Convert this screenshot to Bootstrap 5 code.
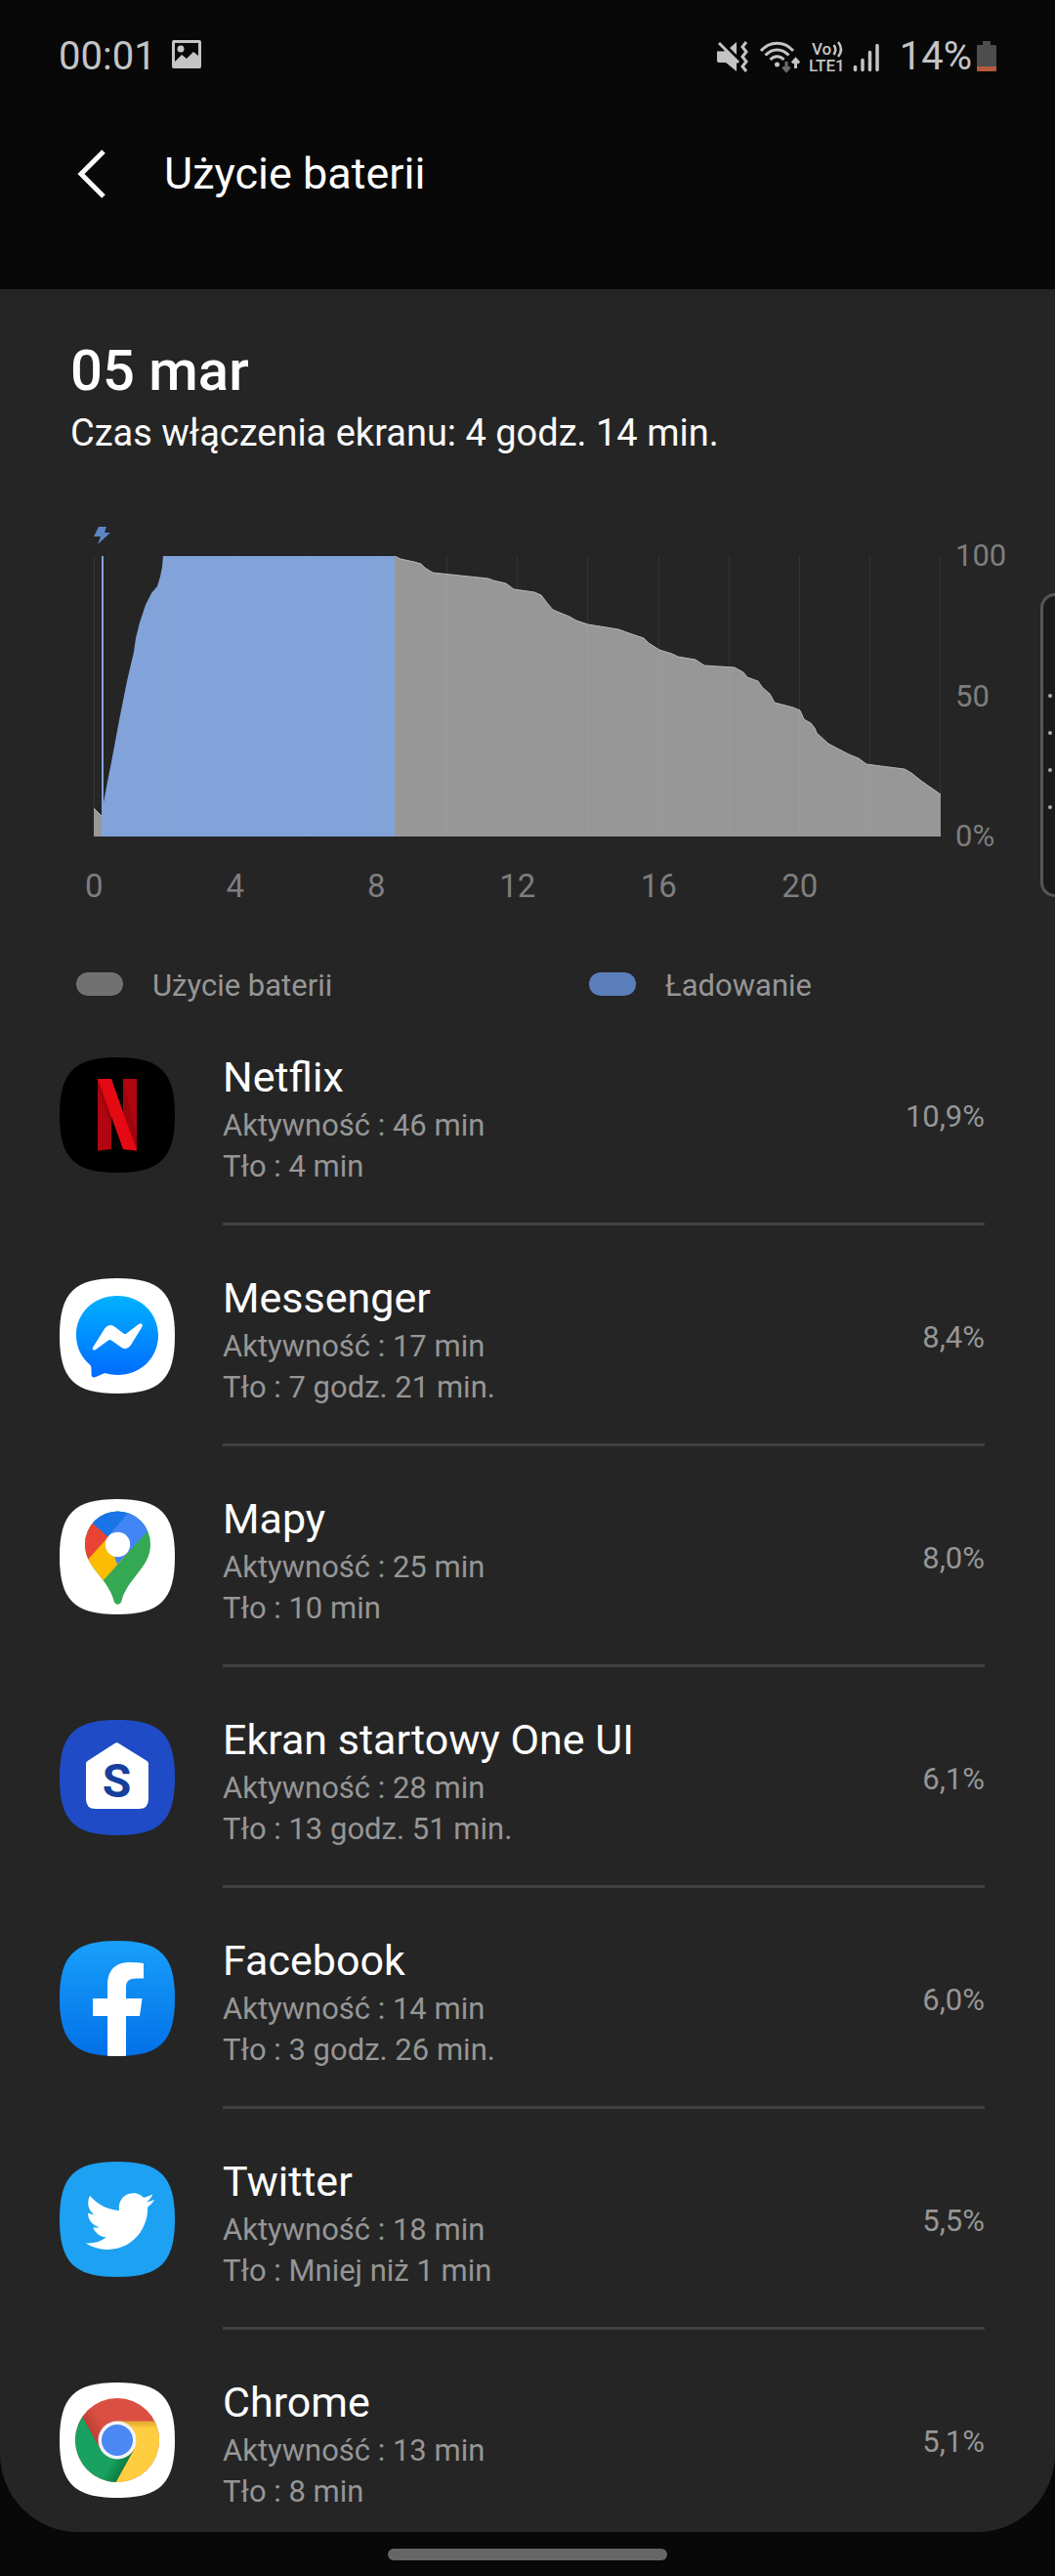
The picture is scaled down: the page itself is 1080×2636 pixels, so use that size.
<!DOCTYPE html>
<html lang="pl" data-bs-theme="dark">
<head>
<meta charset="utf-8">
<meta name="viewport" content="width=device-width, initial-scale=1">
<title>Użycie baterii</title>
<link href="https://cdn.jsdelivr.net/npm/bootstrap@5.3.0/dist/css/bootstrap.min.css" rel="stylesheet">
<style>
  body { background: #080808; color: #fafafa; font-family: Roboto, "Noto Sans", sans-serif; overflow-x: hidden; }
  svg { display: block; flex: none; }
  .status-bar { padding: 34px 60px 0; font-size: 40px; line-height: 48px; color: #c4c4c4; }
  .status-bar .wifi { margin-left: 11px; }
  .status-bar .volte { margin-left: 9px; }
  .status-bar .signal { margin-left: 1px; }
  .status-bar .charge { margin-left: 20px; }
  .status-bar .battery { margin-left: 5px; }
  .app-bar { padding: 64px 70px 86px; gap: 50px; }
  .app-bar h1 { font-size: 45px; line-height: 64px; font-weight: 400; }
  .back-btn { width: 48px; height: 64px; color: #fafafa; }
  .panel { background: #252525; border-radius: 0 0 80px 80px; padding-top: 49px; padding-bottom: 20px; }
  .intro { padding: 0 72px; }
  .intro h2 { font-size: 58px; line-height: 68px; font-weight: 500; margin-bottom: 6px; }
  .intro p { font-size: 38px; line-height: 48px; }
  .chart-box { padding: 72px 0 0 96px; }
  .chart-box .bolt { margin-bottom: 12px; }
  .plot { height: 287px; }
  .y-axis { width: 117px; padding-left: 15px; margin: -20px 0; font-size: 31px; line-height: 40px; color: #7e7e7e; }
  .x-axis { padding: 31px 189px 0 24px; font-size: 33px; line-height: 40px; color: #7e7e7e; }
  .legend-row { padding: 62px 78px 0; font-size: 31px; line-height: 40px; color: #969696; }
  .legend-row > div { flex: 0 0 525px; gap: 30px; }
  .swatch { width: 48px; height: 24px; border-radius: 12px; background: #717171; margin-bottom: 4px; }
  .swatch.charging { background: #5b7fbb; }
  .app-list { padding: 0 72px 0 61px; margin-top: -1px; }
  .app-row { gap: 49px; }
  .app-row > svg { margin-top: 54px; }
  .app-info { border-bottom: 3px solid #404040; padding: 46px 0 36px; }
  .app-row:last-child .app-info { border-bottom: 0; padding-bottom: 0; }
  .app-info h3 { font-size: 43px; line-height: 57px; font-weight: 400; }
  .app-info p, .share { font-size: 31px; line-height: 42px; color: #969696; }
  .share { align-self: flex-start; margin-top: 48px; }
  .edge-handle { right: 0; top: 607px; width: 15px; height: 311px; border: 3px solid #565656; border-right: 0; border-radius: 16px 0 0 16px; background: #1a1a1a; padding: 12px 0 0 5px; }
  .edge-handle i { width: 4px; height: 4px; border-radius: 50%; background: #a8a8a8; margin-bottom: 34px; }
  .edge-handle i:last-child { margin-bottom: 0; }
  .home-bar { width: 286px; height: 12px; border-radius: 6px; background: #666; margin: 17px auto 16px; }
</style>
<script src="https://cdn.jsdelivr.net/npm/bootstrap@5.3.0/dist/js/bootstrap.bundle.min.js"></script>
</head>
<body class="position-relative">

<header>
  <div class="status-bar d-flex align-items-center">
    <span>00:01</span>
    <svg class="ms-3 mb-1" width="30" height="30" viewBox="0 0 30 30" fill="#c4c4c4" aria-hidden="true"><path fill-rule="evenodd" d="M2 0h26a2 2 0 0 1 2 2v25a2 2 0 0 1-2 2H2a2 2 0 0 1-2-2V2a2 2 0 0 1 2-2zm1 3v19l7-7 5 4 7-7 5 4V3z"/><circle cx="9" cy="9" r="3.500"/></svg>
    <div class="d-flex align-items-center ms-auto">
      <svg width="33" height="33" viewBox="0 0 33 33" aria-hidden="true"><path fill="#c4c4c4" d="M0 10.500h7l1.500-1L20 20v11l-11-9H2a2 2 0 0 1-2-2zM20 1v13l-7-7z"/><path d="M2 2l20 20" stroke="#c4c4c4" stroke-width="3"/><path d="M30 1l-4 5 4 5-4 5 4 5-4 5 4 5" fill="none" stroke="#c4c4c4" stroke-width="3"/></svg>
      <svg class="wifi" width="41" height="33" viewBox="0 0 41 33" fill="none" stroke="#c4c4c4" stroke-width="3" aria-hidden="true"><path d="M1 10c9-10.500 24-10.500 33 0M5.500 14.500c7-7.500 17-7.500 24 0M10.500 19c4-4.500 10-4.500 14 0"/><circle cx="17.500" cy="24" r="2.500" fill="#c4c4c4" stroke="none"/><path stroke="#6b6b6b" d="M27 21v9M23.500 26.500l3.500 4 3.500-4"/><path d="M36.500 28v-9M33 22.500l3.500-4 3.500 4"/></svg>
      <svg class="volte" width="44" height="36" viewBox="0 -2 44 36" font-family="Roboto" font-size="17" font-weight="500" fill="#c4c4c4" aria-label="VoLTE 1"><text x="3" y="14">Vo</text><text x="0" y="31">LTE1</text><path d="M25.500 4q3.500 4.500 0 10M30 1q6 7.500 0 15" fill="none" stroke="#c4c4c4" stroke-width="2.500"/></svg>
      <svg class="signal" width="28" height="33" viewBox="0 0 28 33" stroke="#c4c4c4" stroke-width="3.500" stroke-linecap="round" aria-hidden="true"><path d="M2.500 26.500v3M10 19.500v10M17.500 11.500v18M25 4.500v25"/></svg>
      <span class="charge">14%</span>
      <svg class="battery" width="20" height="33" viewBox="0 0 20 33" aria-hidden="true"><path fill="#4d4d4d" d="M6 0h8v4h5a1 1 0 0 1 1 1v21H0V5a1 1 0 0 1 1-1h5z"/><path fill="#b75a3c" d="M0 26h20v4a1 1 0 0 1-1 1H1a1 1 0 0 1-1-1z"/></svg>
    </div>
  </div>
  <nav class="app-bar d-flex align-items-center">
    <button type="button" class="back-btn btn p-0 border-0 d-flex align-items-center justify-content-center" aria-label="Wstecz">
      <svg width="30" height="50" viewBox="0 0 30 50" fill="none" stroke="currentColor" stroke-width="5"><path d="M27 2L4 25l23 23"/></svg>
    </button>
    <h1 class="mb-0">Użycie baterii</h1>
  </nav>
</header>

<main class="panel">
  <section class="intro">
    <h2>05 mar</h2>
    <p class="mb-0">Czas włączenia ekranu: 4 godz. 14 min.</p>
  </section>

  <section class="chart-box">
    <svg class="bolt" width="17" height="18" viewBox="0 0 17 18" fill="#5b86c5" aria-hidden="true"><path d="M5 0h8l-2 6h6L4 18l3-8H0z"/></svg>
    <div class="d-flex plot">
      <svg class="flex-fill h-100 w-0" viewBox="0 0 867 287" preserveAspectRatio="none" role="img" aria-label="Poziom baterii">
        <path d="M.5 0v287M72.500 0v287M144.500 0v287M217.500 0v287M289.500 0v287M361.500 0v287M433.500 0v287M505.500 0v287M578.500 0v287M650.500 0v287M722.500 0v287M794.500 0v287M866.500 0v287" stroke="#343434"/>
        <path fill="#979797" d="M0 287V258l8 8v21z"/>
        <path fill="#82a3d9" d="M8 287V0h2V252L14 231 18 211 26 168 34 128 41 98 43 84 47 68 53 50 59 38 65 31 68 21 70 11 71 0H308V287z"/>
        <path fill="#979797" d="M308 287V0L314 3 328 6 335 8 339 12 347 17 404 23 409 25 422 28 430 34 451 37 458 40 464 48 470 55 487 62 494 66 506 70 537 75 551 80 563 84 568 89 579 96 592 100 598 103 616 106 625 112 656 114 665 119 669 124 680 128 684 134 692 141 697 150 716 155 723 158 727 167 734 171 738 176 740 181 752 192 773 203 783 207 791 213 806 215 830 218 837 222 847 230 867 244V287z"/>
        <path fill="none" stroke="#b9b9b9" d="M0 258L8 266M308 0L314 3 328 6 335 8 339 12 347 17 404 23 409 25 422 28 430 34 451 37 458 40 464 48 470 55 487 62 494 66 506 70 537 75 551 80 563 84 568 89 579 96 592 100 598 103 616 106 625 112 656 114 665 119 669 124 680 128 684 134 692 141 697 150 716 155 723 158 727 167 734 171 738 176 740 181 752 192 773 203 783 207 791 213 806 215 830 218 837 222 847 230 867 244"/>
        <path d="M72.500 2v285M144.500 0v287M217.500 0v287M289.500 0v287M361.500 19v268M433.500 36v251M505.500 71v216M578.500 97v190M650.500 115v172M722.500 159v128M794.500 215v72" stroke="#fff" stroke-opacity=".04"/>
      </svg>
      <div class="y-axis d-flex flex-column justify-content-between"><span>100</span><span>50</span><span>0%</span></div>
    </div>
  </section>
  <div class="x-axis d-flex text-center">
    <span class="col">0</span><span class="col">4</span><span class="col">8</span><span class="col">12</span><span class="col">16</span><span class="col">20</span>
  </div>
  <div class="legend-row d-flex">
    <div class="d-flex align-items-center"><span class="swatch"></span><span>Użycie baterii</span></div>
    <div class="d-flex align-items-center flex-shrink-1"><span class="swatch charging"></span><span>Ładowanie</span></div>
  </div>

  <ul class="app-list list-unstyled mb-0">
    <li class="app-row d-flex align-items-start">
      <svg width="118" height="118" viewBox="0 0 118 118" aria-hidden="true"><path d="M59 0C103 0 118 15 118 59S103 118 59 118 0 103 0 59 15 0 59 0z"/><path fill="#b1060f" d="M39 22h14v72l-14 1.500zM65 22h14v73.500L65 94z"/><path fill="#7c060c" d="M39 22l14 36v14L39 32zM65 22v38l14 32V80z" opacity=".35"/><path fill="#e50914" d="M39 22h14l26 73.500Q72 94 65 94z"/></svg>
      <div class="app-info flex-fill d-flex align-items-center justify-content-between">
        <div><h3 class="mb-0">Netflix</h3><p class="mb-0">Aktywność : 46 min</p><p class="mb-0">Tło : 4 min</p></div>
        <span class="share">10,9%</span>
      </div>
    </li>
    <li class="app-row d-flex align-items-start">
      <svg width="118" height="118" viewBox="0 0 118 118" aria-hidden="true"><defs><linearGradient id="gMsg" x1="0" y1="0" x2="0" y2="1"><stop offset="0" stop-color="#00b2ff"/><stop offset="1" stop-color="#006aff"/></linearGradient></defs><path fill="#fff" d="M59 0C103 0 118 15 118 59S103 118 59 118 0 103 0 59 15 0 59 0z"/><path fill="url(#gMsg)" d="M59 18C35 18 17 35.500 17 58c0 12 5 23 14 30.500 1 .8 1.400 2 1.400 3l.2 7c0 2.500 2 3.500 4.500 2.500l8-3.500c.8-.3 1.500-.4 2.300-.2C51 98.500 55 99 59 99c24 0 42-17.500 42-40.500S83 18 59 18z"/><path fill="#fff" d="M34.200 70.500L46.500 51q4-5 9-2l10 7.500q1.500 1 3 0L81 47q2.500-1.500 3.500 0 .8 1.500-.5 3.500L72.500 69q-4 5-9 2L53 63.500q-1.500-1-3 0L37 73q-2 1-3 0-.8-1 .2-2.500z"/></svg>
      <div class="app-info flex-fill d-flex align-items-center justify-content-between">
        <div><h3 class="mb-0">Messenger</h3><p class="mb-0">Aktywność : 17 min</p><p class="mb-0">Tło : 7 godz. 21 min.</p></div>
        <span class="share">8,4%</span>
      </div>
    </li>
    <li class="app-row d-flex align-items-start">
      <svg width="118" height="118" viewBox="0 0 118 118" aria-hidden="true"><defs><clipPath id="cPin"><path d="M26 46a33.500 33.500 0 0 1 67 0C93 58 88 66 80 76 72 86 66 94 63.500 104c-1 5-7 5-8 0C53 94 47 86 39 76 31 66 26 58 26 46z"/></clipPath></defs><path fill="#fff" d="M59 0C103 0 118 15 118 59S103 118 59 118 0 103 0 59 15 0 59 0z"/><g clip-path="url(#cPin)"><path fill="#34a853" d="M0 0h118v118H0z"/><path fill="#fbbc04" d="M20 71L60 25l12 28-45 50z"/><path fill="#ea4335" d="M20 12L34 25l16 13.500L20 72z"/><path fill="#1a73e8" d="M34 25V0h50L49.500 38.500z"/><path fill="#4285f4" d="M82 0L49.500 38.500 59 67 110 11V0z"/></g><circle cx="59.500" cy="46.500" r="12.700" fill="#fff"/></svg>
      <div class="app-info flex-fill d-flex align-items-center justify-content-between">
        <div><h3 class="mb-0">Mapy</h3><p class="mb-0">Aktywność : 25 min</p><p class="mb-0">Tło : 10 min</p></div>
        <span class="share">8,0%</span>
      </div>
    </li>
    <li class="app-row d-flex align-items-start">
      <svg width="118" height="118" viewBox="0 0 118 118" aria-hidden="true"><path fill="#1f4bc6" d="M59 0C103 0 118 15 118 59S103 118 59 118 0 103 0 59 15 0 59 0z"/><path fill="#fff" d="M56.500 24q2-1.500 4 0l29 18q1.500 1 1.500 3v36q0 10-10 10H37q-10 0-10-10V45q0-2 1.500-3z"/><text x="58.500" y="79" text-anchor="middle" font-family="Roboto" font-size="48" font-weight="700" fill="#173f9c">S</text></svg>
      <div class="app-info flex-fill d-flex align-items-center justify-content-between">
        <div><h3 class="mb-0">Ekran startowy One UI</h3><p class="mb-0">Aktywność : 28 min</p><p class="mb-0">Tło : 13 godz. 51 min.</p></div>
        <span class="share">6,1%</span>
      </div>
    </li>
    <li class="app-row d-flex align-items-start">
      <svg width="118" height="118" viewBox="0 0 118 118" aria-hidden="true"><defs><linearGradient id="gFb" x1="0" y1="0" x2="0" y2="1"><stop offset="0" stop-color="#18a0fb"/><stop offset="1" stop-color="#0270e8"/></linearGradient></defs><path fill="url(#gFb)" d="M59 0C103 0 118 15 118 59S103 118 59 118 0 103 0 59 15 0 59 0z"/><path fill="#fff" d="M49 117.800V77H34V59h15V46c0-16 8-24 23-24q8 0 14 1v15.500h-7c-8 0-11 3-11 9V59h16.500L82 77H68v40.800q-9 .4-19 0z"/></svg>
      <div class="app-info flex-fill d-flex align-items-center justify-content-between">
        <div><h3 class="mb-0">Facebook</h3><p class="mb-0">Aktywność : 14 min</p><p class="mb-0">Tło : 3 godz. 26 min.</p></div>
        <span class="share">6,0%</span>
      </div>
    </li>
    <li class="app-row d-flex align-items-start">
      <svg width="118" height="118" viewBox="0 0 118 118" aria-hidden="true"><path fill="#1da1f2" d="M59 0C103 0 118 15 118 59S103 118 59 118 0 103 0 59 15 0 59 0z"/><path fill="#fff" transform="translate(26.300 25.500) scale(2.960)" d="M23.953 4.570a10 10 0 0 1-2.825.775 4.958 4.958 0 0 0 2.163-2.723c-.951.555-2.005.959-3.127 1.184a4.920 4.920 0 0 0-8.384 4.482C7.690 8.095 4.067 6.130 1.640 3.162a4.822 4.822 0 0 0-.666 2.475c0 1.710.870 3.213 2.188 4.096a4.904 4.904 0 0 1-2.228-.616v.06a4.923 4.923 0 0 0 3.946 4.827 4.996 4.996 0 0 1-2.212.085 4.936 4.936 0 0 0 4.604 3.417 9.867 9.867 0 0 1-6.102 2.105c-.390 0-.779-.023-1.170-.067a13.995 13.995 0 0 0 7.557 2.209c9.053 0 13.998-7.496 13.998-13.985 0-.210 0-.420-.015-.630A9.935 9.935 0 0 0 24 4.590z"/></svg>
      <div class="app-info flex-fill d-flex align-items-center justify-content-between">
        <div><h3 class="mb-0">Twitter</h3><p class="mb-0">Aktywność : 18 min</p><p class="mb-0">Tło : Mniej niż 1 min</p></div>
        <span class="share">5,5%</span>
      </div>
    </li>
    <li class="app-row d-flex align-items-start">
      <svg width="118" height="118" viewBox="0 0 118 118" aria-hidden="true"><defs><linearGradient id="gY" x1="0" y1="0" x2="0" y2="1"><stop offset="0" stop-color="#e0a52e"/><stop offset=".12" stop-color="#ffcd40"/></linearGradient><linearGradient id="gR" gradientUnits="userSpaceOnUse" x1="34" y1="52" x2="46" y2="45"><stop offset="0" stop-color="#bf4137"/><stop offset="1" stop-color="#db4f43"/></linearGradient><linearGradient id="gG" gradientUnits="userSpaceOnUse" x1="66" y1="86" x2="54" y2="79"><stop offset="0" stop-color="#0a8043"/><stop offset="1" stop-color="#18a160"/></linearGradient></defs><path fill="#fff" d="M59 0C103 0 118 15 118 59S103 118 59 118 0 103 0 59 15 0 59 0z"/><circle cx="59" cy="59" r="43" fill="url(#gR)"/><path fill="url(#gY)" d="M59 39.500h38.300A43 43 0 0 1 57.500 102L76 68.700 59 59z"/><path fill="url(#gG)" d="M23.300 35.300L42 68.700 59 59l17 9.700L57.500 102A43 43 0 0 1 23.300 35.300z"/><circle cx="59" cy="59" r="19.500" fill="#f2f2f7"/><circle cx="59" cy="59" r="16" fill="#4a88f4"/></svg>
      <div class="app-info flex-fill d-flex align-items-center justify-content-between">
        <div><h3 class="mb-0">Chrome</h3><p class="mb-0">Aktywność : 13 min</p><p class="mb-0">Tło : 8 min</p></div>
        <span class="share">5,1%</span>
      </div>
    </li>
  </ul>
</main>

<div class="home-bar"></div>

<aside class="edge-handle position-absolute d-flex flex-column justify-content-center" aria-hidden="true"><i></i><i></i><i></i><i></i></aside>

</body>
</html>
